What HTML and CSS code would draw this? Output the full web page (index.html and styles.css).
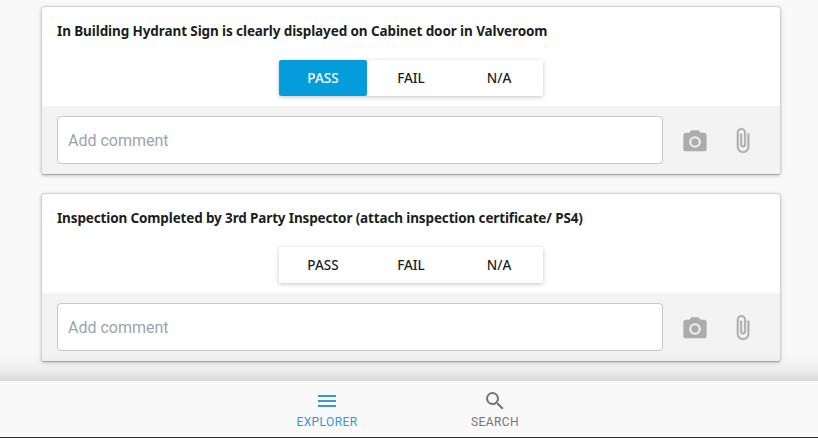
FILE: index.html
```html
<!DOCTYPE html>
<html lang="en">
<head>
<meta charset="utf-8">
<title>Inspection</title>
<link rel="stylesheet" href="styles.css">
</head>
<body>
<main class="list">
  <section class="card">
    <div class="body">
      <h2 class="title title-first">In Building Hydrant Sign is clearly displayed on Cabinet door in Valveroom</h2>
      <div class="choices">
        <button class="choice selected">PASS</button>
        <button class="choice">FAIL</button>
        <button class="choice">N/A</button>
      </div>
    </div>
    <div class="footer">
      <input class="comment" type="text" placeholder="Add comment">
      <svg class="icon camera" viewBox="0 0 24 24"><path fill-rule="evenodd" d="M9 2 7.17 4H4c-1.1 0-2 .9-2 2v12c0 1.100.9 2 2 2h16c1.100 0 2-.9 2-2V6c0-1.100-.9-2-2-2h-3.170L15 2H9zm3 15a5 5 0 1 1 0-10 5 5 0 0 1 0 10z"/><circle cx="12" cy="12" r="3.200"/></svg>
      <svg class="icon clip" viewBox="0 0 24 24"><path d="M16.500 6v11.500c0 2.210-1.790 4-4 4s-4-1.790-4-4V5a2.500 2.500 0 0 1 5 0v10.500c0 .55-.45 1-1 1s-1-.45-1-1V6H10v9.500a2.500 2.500 0 0 0 5 0V5c0-2.210-1.790-4-4-4S7 2.790 7 5v12.500c0 3.040 2.460 5.500 5.500 5.500s5.500-2.460 5.500-5.500V6h-1.500z"/></svg>
    </div>
  </section>
  <section class="card">
    <div class="body">
      <h2 class="title title-second">Inspection Completed by 3rd Party Inspector (attach inspection certificate/ PS4)</h2>
      <div class="choices">
        <button class="choice">PASS</button>
        <button class="choice">FAIL</button>
        <button class="choice">N/A</button>
      </div>
    </div>
    <div class="footer">
      <input class="comment" type="text" placeholder="Add comment">
      <svg class="icon camera" viewBox="0 0 24 24"><path fill-rule="evenodd" d="M9 2 7.17 4H4c-1.1 0-2 .9-2 2v12c0 1.100.9 2 2 2h16c1.100 0 2-.9 2-2V6c0-1.100-.9-2-2-2h-3.170L15 2H9zm3 15a5 5 0 1 1 0-10 5 5 0 0 1 0 10z"/><circle cx="12" cy="12" r="3.200"/></svg>
      <svg class="icon clip" viewBox="0 0 24 24"><path d="M16.500 6v11.500c0 2.210-1.790 4-4 4s-4-1.790-4-4V5a2.500 2.500 0 0 1 5 0v10.500c0 .55-.45 1-1 1s-1-.45-1-1V6H10v9.500a2.500 2.500 0 0 0 5 0V5c0-2.210-1.790-4-4-4S7 2.790 7 5v12.500c0 3.040 2.460 5.500 5.500 5.500s5.500-2.460 5.500-5.500V6h-1.500z"/></svg>
    </div>
  </section>
</main>
<nav class="nav">
  <a class="tab active">
    <svg class="tab-icon" viewBox="0 0 24 24"><path d="M3 18h18v-2H3v2zm0-5h18v-2H3v2zm0-7v2h18V6H3z"/></svg>
    <span>EXPLORER</span>
  </a>
  <a class="tab">
    <svg class="tab-icon" viewBox="0 0 24 24"><path d="M15.500 14h-.79l-.28-.27A6.470 6.470 0 0 0 16 9.500 6.500 6.500 0 1 0 9.500 16c1.610 0 3.090-.59 4.230-1.570l.27.28v.79l5 4.990L20.490 19l-4.990-5zm-6 0a4.500 4.500 0 1 1 0-9 4.500 4.500 0 0 1 0 9z"/></svg>
    <span>SEARCH</span>
  </a>
</nav>
</body>
</html>
```
FILE: styles.css
```css
* { box-sizing: border-box; }
body {
  margin: 0;
  height: 438px;
  overflow: hidden;
  display: flex;
  flex-direction: column;
  background: #f9f9f9;
  font-family: Roboto, sans-serif;
}
.list {
  flex: 1;
  display: flex;
  flex-direction: column;
  gap: 18px;
  padding: 6px 37px 0 41px;
}
.card {
  height: 169px;
  border: 1px solid #d0d0d0;
  border-bottom-color: #a5a5a5;
  border-radius: 4px;
  background: #fff;
  box-shadow: 0 1px 3px rgba(0, 0, 0, .16), 0 1px 6px rgba(0, 0, 0, .06);
}
.body { height: 99px; padding: 14px 15px 0; }
.title {
  margin: 0;
  height: 20px;
  font: 700 13.5px/20px "Noto Sans", sans-serif;
  color: #1b1e21;
  white-space: nowrap;
}
.title-first { letter-spacing: -.1px; }
.title-second { letter-spacing: -.135px; }
.choices {
  display: flex;
  width: 264px;
  margin: 19px auto 0;
  border-radius: 2px;
  box-shadow: 0 1px 4px rgba(0, 0, 0, .24);
}
.choice {
  flex: 1;
  height: 36px;
  padding: 0;
  border: 0;
  border-radius: 2px;
  background: #fff;
  color: #1b1e21;
  font: 500 13.5px/36px "Noto Sans", sans-serif;
}
.selected { background: #049cdb; color: #fff; }
.footer {
  display: flex;
  align-items: center;
  height: 68px;
  padding: 0 20px 0 15px;
  background: #f3f3f3;
  border-radius: 0 0 3px 3px;
}
.comment {
  width: 606px;
  height: 48px;
  padding: 0 10px;
  border: 1px solid #c8c8c8;
  border-radius: 4px;
  background: #fff;
  font: 16px Roboto, sans-serif;
}
.comment::placeholder { color: #9ca3af; opacity: 1; }
.icon { fill: #acacac; flex: none; }
.camera { width: 28px; height: 28px; margin: 3px 0 0 18px; }
.clip { width: 27px; height: 27px; margin: 1px 0 0 20px; stroke: #acacac; stroke-width: .3; }
.nav {
  display: flex;
  justify-content: center;
  height: 57px;
  margin: 0 -40px;
  padding-top: 8px;
  padding-left: 4px;
  background: #f9f9f9;
  border-bottom: 1px solid #2b2b2b;
  box-shadow: 0 0 28px rgba(0, 0, 0, .25);
  position: relative;
}
.tab {
  width: 168px;
  display: flex;
  flex-direction: column;
  align-items: center;
  color: #757575;
  font-size: 12px;
  line-height: 18px;
  letter-spacing: .4px;
}
.tab-icon { width: 24px; height: 24px; fill: currentColor; }
.active { color: #3498db; }
```
